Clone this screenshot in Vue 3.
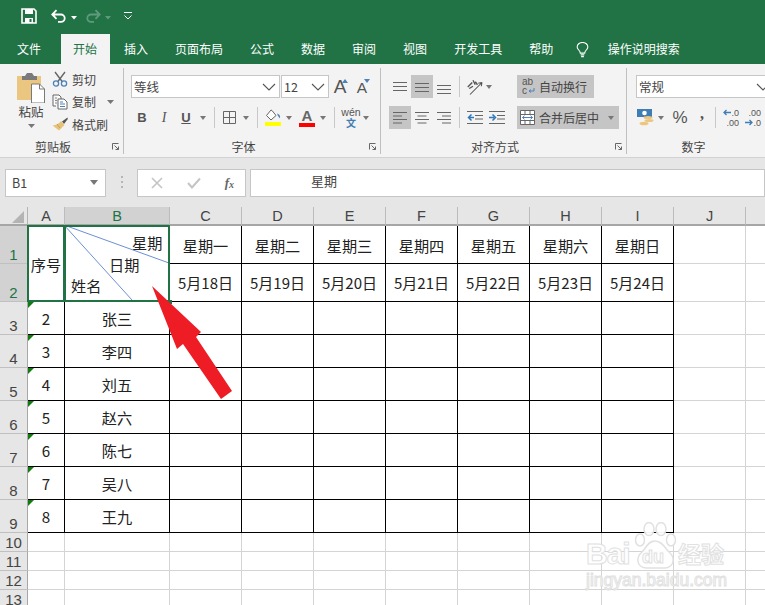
<script setup>
const tabs = ['文件', '开始', '插入', '页面布局', '公式', '数据', '审阅', '视图', '开发工具', '帮助']
const letters = ['A', 'B', 'C', 'D', 'E', 'F', 'G', 'H', 'I', 'J', 'K']
const weekdays = ['星期一', '星期二', '星期三', '星期四', '星期五', '星期六', '星期日']
const dates = ['5月18日', '5月19日', '5月20日', '5月21日', '5月22日', '5月23日', '5月24日']
const people = [
  { n: 3, id: '2', name: '张三' },
  { n: 4, id: '3', name: '李四' },
  { n: 5, id: '4', name: '刘五' },
  { n: 6, id: '5', name: '赵六' },
  { n: 7, id: '6', name: '陈七' },
  { n: 8, id: '7', name: '吴八' },
  { n: 9, id: '8', name: '王九' },
]
const emptyRows = [10, 11, 12, 13]
</script>

<template>
  <div class="app">
    <header class="title">
      <svg class="save" width="16" height="16" viewBox="0 0 16 16">
        <path d="M1 1h12l2 2v12H1z" fill="none" stroke="#fff" stroke-width="1.6" />
        <rect x="4" y="1" width="8" height="5" fill="#fff" />
        <rect x="4" y="10" width="8" height="5" fill="#fff" />
        <rect x="8.5" y="11" width="2" height="3" fill="#217346" />
      </svg>
      <svg class="undo" width="16" height="14" viewBox="0 0 16 14">
        <path d="M1.5 5.5 H10 a3.6 3.6 0 0 1 0 7.4 H7 M5.5 1.2 L1.3 5.5 L5.5 9.8" fill="none" stroke="#fff" stroke-width="1.8" />
      </svg>
      <svg class="qarrow" width="6" height="4" viewBox="0 0 6 4"><path d="M0 0h6L3 3.5z" fill="#fff" /></svg>
      <svg class="redo" width="16" height="14" viewBox="0 0 16 14">
        <path d="M14.5 5.5 H6 a3.6 3.6 0 0 0 0 7.4 H9 M10.5 1.2 L14.7 5.5 L10.5 9.8" fill="none" stroke="#5f9a7c" stroke-width="1.8" />
      </svg>
      <svg class="qarrow dim" width="6" height="4" viewBox="0 0 6 4"><path d="M0 0h6L3 3.5z" fill="#5f9a7c" /></svg>
      <svg class="custom" width="8" height="8" viewBox="0 0 8 8">
        <path d="M0 .5h8" stroke="#fff" fill="none" />
        <path d="M.5 3.5 L4 7 L7.5 3.5" stroke="#fff" fill="none" />
      </svg>
    </header>

    <nav class="tabs">
      <span v-for="t in tabs" :key="t" class="tab" :class="{ active: t === '开始', file: t === '文件' }">{{ t }}</span>
      <svg class="bulb" width="13" height="16" viewBox="0 0 14 18">
        <path d="M4.5 12.5 C4.5 9.5 1 8.5 1 5.5 A6 5 0 0 1 13 5.5 C13 8.5 9.5 9.5 9.5 12.5 Z" fill="none" stroke="#fff" stroke-width="1.2" />
        <path d="M5 14.5h4M5.5 16.5h3" stroke="#fff" stroke-width="1.3" />
      </svg>
      <span class="search">操作说明搜索</span>
    </nav>

    <section class="ribbon">
      <div class="group g-clip">
        <div class="clip-body">
          <div class="paste">
            <svg width="30" height="31" viewBox="0 0 30 31">
              <path d="M1 4h24v24H1z" fill="#eac681" />
              <path d="M6 4h3l2-3h5l2 3h3v4H6z" fill="#7a7a7a" />
              <path d="M15.5 12h8l5 5v14h-13z" fill="#fff" stroke="#7a7a7a" />
              <path d="M23.5 12v5h5" fill="none" stroke="#7a7a7a" />
            </svg>
            <span class="paste-text">粘贴</span>
            <svg class="arrow paste-arrow" width="7" height="4" viewBox="0 0 7 4"><path d="M0 0h7L3.5 4z" /></svg>
          </div>
          <div class="clip-list">
            <div class="clip-item">
              <svg width="16" height="16" viewBox="0 0 16 16">
                <path d="M3 1 L10.5 11 M13 1 L5.5 11" stroke="#666" stroke-width="1.4" fill="none" />
                <circle cx="4" cy="12.5" r="2.6" fill="none" stroke="#4d82b8" stroke-width="1.3" />
                <circle cx="12" cy="12.5" r="2.6" fill="none" stroke="#4d82b8" stroke-width="1.3" />
              </svg>
              <span>剪切</span>
            </div>
            <div class="clip-item">
              <svg width="16" height="16" viewBox="0 0 16 16">
                <path d="M1 1h6l2 2v2M4 12H1V1" fill="#fff" stroke="#666" />
                <path d="M6 5h6l3 3v7H6z" fill="#fff" stroke="#666" />
                <path d="M8 8h3M8 10h5M8 12.5h5" stroke="#4d82b8" />
                <path d="M3 4h2M3 6.500h2M3 9h2" stroke="#888" />
              </svg>
              <span>复制</span>
              <svg class="arrow copy-arrow" width="7" height="4" viewBox="0 0 7 4"><path d="M0 0h7L3.500 4z" /></svg>
            </div>
            <div class="clip-item">
              <svg width="16" height="14" viewBox="0 0 16 14">
                <path d="M15.500 .5 L10 4.500 L12 7 L15.800 2z" fill="#555" />
                <path d="M9 4 L12.500 8 L7 13.500 L.5 8.500 C4 8 6.500 7 9 4z" fill="#e7c27c" />
                <path d="M5 7 l3 4" stroke="#c79f56" fill="none" />
              </svg>
              <span>格式刷</span>
            </div>
          </div>
        </div>
        <div class="group-foot">
          <span class="group-label">剪贴板</span>
          <svg class="launcher" width="7" height="7" viewBox="0 0 7 7"><path d="M.5 6.500v-6h6M2.500 2.500l4 4M3.500 6.500h3v-3" fill="none" stroke="#666" /></svg>
        </div>
      </div>

      <div class="group g-font">
        <div class="rows">
          <div class="row">
            <div class="combo font-combo">
              <span>等线</span>
              <svg class="chev" width="14" height="8" viewBox="0 0 14 8"><path d="M1 1l6 6 6-6" fill="none" stroke="#555" stroke-width="1.1" /></svg>
            </div>
            <div class="combo size-combo">
              <span>12</span>
              <svg class="chev" width="14" height="8" viewBox="0 0 14 8"><path d="M1 1l6 6 6-6" fill="none" stroke="#555" stroke-width="1.1" /></svg>
            </div>
            <div class="tool sizer">
              <span class="big-a">A</span>
              <svg class="caret up" width="6" height="4" viewBox="0 0 6 4"><path d="M3 0l3 4H0z" fill="#4d82b8" /></svg>
            </div>
            <div class="tool sizer">
              <span class="small-a">A</span>
              <svg class="caret down" width="6" height="4" viewBox="0 0 6 4"><path d="M0 0h6L3 4z" fill="#4d82b8" /></svg>
            </div>
          </div>
          <div class="row">
            <span class="tool fmt bold">B</span>
            <span class="tool fmt italic">I</span>
            <span class="tool fmt under">U</span>
            <svg class="arrow a-slot" width="6" height="4" viewBox="0 0 6 4"><path d="M0 0h6L3 4z" /></svg>
            <i class="sep sep-a"></i>
            <span class="tool">
              <svg width="13" height="13" viewBox="0 0 13 13"><path d="M.5.5h12v12H.5zM6.500.5v12M.5 6.500h12" fill="none" stroke="#666" /></svg>
            </span>
            <svg class="arrow a-slot" width="6" height="4" viewBox="0 0 6 4"><path d="M0 0h6L3 4z" /></svg>
            <i class="sep sep-b"></i>
            <span class="tool">
              <svg width="17" height="17" viewBox="0 0 17 17">
                <path d="M6 1 L1.500 6.500 L6 11 L11 6.500 L7 1.500z" fill="#fff" stroke="#666" />
                <path d="M12 4.500 C14.500 5 15.500 7 15 9.500 L13 7z" fill="#4d82b8" />
                <rect y="13" width="16" height="4" fill="#ffff00" />
              </svg>
            </span>
            <svg class="arrow a-slot2" width="6" height="4" viewBox="0 0 6 4"><path d="M0 0h6L3 4z" /></svg>
            <span class="tool color-a">
              <span class="color-letter">A</span>
              <i class="color-bar"></i>
            </span>
            <svg class="arrow a-slot2" width="6" height="4" viewBox="0 0 6 4"><path d="M0 0h6L3 4z" /></svg>
            <i class="sep sep-c"></i>
            <span class="tool wen">
              <span class="wen-top">wén</span>
              <span class="wen-bot">文</span>
            </span>
            <svg class="arrow a-slot5" width="6" height="4" viewBox="0 0 6 4"><path d="M0 0h6L3 4z" /></svg>
          </div>
        </div>
        <div class="group-foot">
          <span class="group-label">字体</span>
          <svg class="launcher" width="7" height="7" viewBox="0 0 7 7"><path d="M.5 6.500v-6h6M2.500 2.500l4 4M3.500 6.500h3v-3" fill="none" stroke="#666" /></svg>
        </div>
      </div>

      <div class="group g-align">
        <div class="rows">
          <div class="row">
            <span class="tool al">
              <svg width="14" height="10" viewBox="0 0 14 10"><path d="M0 .5h14M0 4.500h14M0 8.500h14" stroke="#666" /></svg>
            </span>
            <span class="tool al on">
              <svg width="14" height="10" viewBox="0 0 14 10"><path d="M0 1.500h14M0 5.500h14M0 9.500h14" stroke="#666" /></svg>
            </span>
            <span class="tool al bottom">
              <svg width="14" height="10" viewBox="0 0 14 10"><path d="M0 1.500h14M0 5.500h14M0 9.500h14" stroke="#666" /></svg>
            </span>
            <i class="sep sep-d"></i>
            <span class="tool orient">
              <svg width="18" height="16" viewBox="0 0 24 20">
                <path d="M4 20 L20 4 M20 4 l-5 1 M20 4 l-1 5" stroke="#4f4f4f" fill="none" stroke-width="1.4" />
                <path d="M1 10 L7 4 M3 12 l5 -3 M8 1 l3 6 M11 3 l3 4" stroke="#555" fill="none" stroke-width="1.8" />
              </svg>
            </span>
            <svg class="arrow a-slot3" width="6" height="4" viewBox="0 0 6 4"><path d="M0 0h6L3 4z" /></svg>
          </div>
          <div class="row">
            <span class="tool al on">
              <svg width="14" height="12" viewBox="0 0 14 12"><path d="M0 .5h14M0 4h9M0 7.500h14M0 11h9" stroke="#666" /></svg>
            </span>
            <span class="tool al">
              <svg width="14" height="12" viewBox="0 0 14 12"><path d="M0 .5h14M2.500 4h9M0 7.500h14M2.500 11h9" stroke="#666" /></svg>
            </span>
            <span class="tool al">
              <svg width="14" height="12" viewBox="0 0 14 12"><path d="M0 .5h14M5 4h9M0 7.500h14M5 11h9" stroke="#666" /></svg>
            </span>
            <i class="sep sep-d"></i>
            <span class="tool indent">
              <svg width="16" height="13" viewBox="0 0 16 13">
                <path d="M0 .5h16M8 4.500h8M8 8h8M0 12.500h16" stroke="#666" />
                <path d="M7 6.500H2M4.500 3.500 L1.500 6.500 L4.500 9.500" stroke="#2f77b8" stroke-width="1.5" fill="none" />
              </svg>
            </span>
            <span class="tool indent">
              <svg width="16" height="13" viewBox="0 0 16 13">
                <path d="M0 .5h16M8 4.500h8M8 8h8M0 12.500h16" stroke="#666" />
                <path d="M0 6.500h5M3.500 3.500 L6.500 6.500 L3.500 9.500" stroke="#2f77b8" stroke-width="1.5" fill="none" />
              </svg>
            </span>
          </div>
        </div>
        <div class="wrap-col">
          <div class="wide-btn wrap-btn">
            <svg width="13" height="17" viewBox="0 0 13 17">
              <text x="0" y="7" class="abc">ab</text>
              <text x="0" y="16" class="abc">c</text>
              <path d="M12 10v3H7.500M9 11.500 L7 13 L9 14.500" stroke="#4d82b8" fill="none" />
            </svg>
            <span>自动换行</span>
          </div>
          <div class="wide-btn merge-btn">
            <svg width="15" height="15" viewBox="0 0 15 15">
              <path d="M.5.5h14v14H.5zM.5 4.500h14M.5 10.500h14M5 .5v4M10 .5v4M5 10.500v4M10 10.500v4" fill="#fff" stroke="#666" />
              <path d="M2.500 7.500h10M4.500 5.700 L2.500 7.500 L4.500 9.300M10.500 5.700 L12.500 7.500 L10.500 9.300" stroke="#4d82b8" fill="none" />
            </svg>
            <span>合并后居中</span>
            <svg class="arrow merge-arrow" width="6" height="4" viewBox="0 0 6 4"><path d="M0 0h6L3 4z" /></svg>
          </div>
        </div>
        <div class="group-foot">
          <span class="group-label">对齐方式</span>
          <svg class="launcher" width="7" height="7" viewBox="0 0 7 7"><path d="M.5 6.500v-6h6M2.500 2.500l4 4M3.500 6.500h3v-3" fill="none" stroke="#666" /></svg>
        </div>
      </div>

      <div class="group g-num">
        <div class="rows">
          <div class="row">
            <div class="combo num-combo">
              <span>常规</span>
              <svg class="chev" width="14" height="8" viewBox="0 0 14 8"><path d="M1 1l6 6 6-6" fill="none" stroke="#555" stroke-width="1.1" /></svg>
            </div>
          </div>
          <div class="row">
            <span class="tool money">
              <svg width="18" height="17" viewBox="0 0 18 17">
                <rect width="15" height="8" fill="#3f7db5" />
                <circle cx="7.500" cy="4" r="2.300" fill="#fff" />
                <ellipse cx="11" cy="8.500" rx="4.500" ry="1.500" fill="#eac681" />
                <ellipse cx="12" cy="11.500" rx="4.500" ry="1.500" fill="#eac681" />
                <ellipse cx="7" cy="14.500" rx="4.500" ry="1.800" fill="#eac681" />
              </svg>
            </span>
            <svg class="arrow a-slot4" width="6" height="4" viewBox="0 0 6 4"><path d="M0 0h6L3 4z" /></svg>
            <span class="tool pct">%</span>
            <span class="tool comma">,</span>
            <i class="sep sep-e"></i>
            <span class="tool dec">
              <span class="dec-line"><svg width="8" height="7" viewBox="0 0 8 7"><path d="M8 3.500H1M3.500 1 L1 3.500 L3.500 6" stroke="#3f7db5" stroke-width="1.300" fill="none" /></svg>.0</span>
              <span class="dec-line">.00</span>
            </span>
            <span class="tool dec">
              <span class="dec-line">.00</span>
              <span class="dec-line"><svg width="8" height="7" viewBox="0 0 8 7"><path d="M0 3.500h7M4.500 1 L7 3.500 L4.500 6" stroke="#3f7db5" stroke-width="1.300" fill="none" /></svg>.0</span>
            </span>
          </div>
        </div>
        <div class="group-foot">
          <span class="group-label">数字</span>
          <svg class="launcher" width="7" height="7" viewBox="0 0 7 7"><path d="M.5 6.500v-6h6M2.500 2.500l4 4M3.500 6.500h3v-3" fill="none" stroke="#666" /></svg>
        </div>
      </div>
    </section>

    <section class="formula">
      <div class="name-box">
        <span>B1</span>
        <svg width="8" height="5" viewBox="0 0 8 5"><path d="M0 0h8L4 5z" fill="#777" /></svg>
      </div>
      <i class="dots"></i>
      <div class="fx-box">
        <svg width="12" height="12" viewBox="0 0 12 12"><path d="M1 1l10 10M11 1L1 11" stroke="#c4c4c4" stroke-width="1.600" /></svg>
        <svg width="14" height="12" viewBox="0 0 14 12"><path d="M1 6l4 4.500L13 1.500" stroke="#c4c4c4" stroke-width="2" fill="none" /></svg>
        <span class="fx">f<sub>x</sub></span>
      </div>
      <div class="input">星期</div>
    </section>

    <main class="sheet">
      <div class="grid">
        <div class="corner">
          <svg width="12" height="12" viewBox="0 0 12 12"><path d="M12 0v12H0z" fill="#b4b4b4" /></svg>
        </div>
        <div v-for="l in letters" :key="l" class="col-head" :class="{ sel: l === 'B', hot: l === 'B' }">{{ l }}</div>

        <div class="row-head sel hot">1</div>
        <div class="cell black merged picked">序号</div>
        <div class="cell black merged picked diag">
          <svg class="diag-lines" width="105" height="76" viewBox="0 0 105 76">
            <path d="M0 0 L105 38 M0 0 L68 75" stroke="#6b8fd6" stroke-width="1" fill="none" />
          </svg>
          <span class="d1">星期</span>
          <span class="d2">日期</span>
          <span class="d3">姓名</span>
        </div>
        <div v-for="d in weekdays" :key="d" class="cell black">{{ d }}</div>
        <div class="cell"></div>
        <div class="cell"></div>

        <div class="row-head sel hot">2</div>
        <div v-for="d in dates" :key="d" class="cell black date">{{ d }}</div>
        <div class="cell"></div>
        <div class="cell"></div>

        <template v-for="p in people" :key="p.n">
          <div class="row-head">{{ p.n }}</div>
          <div class="cell black flagged">{{ p.id }}</div>
          <div class="cell black">{{ p.name }}</div>
          <div v-for="c in 7" :key="c" class="cell black"></div>
          <div class="cell"></div>
          <div class="cell"></div>
        </template>

        <template v-for="n in emptyRows" :key="n">
          <div class="row-head">{{ n }}</div>
          <div v-for="c in 11" :key="c" class="cell"></div>
        </template>
      </div>

      <svg class="pointer" width="90" height="120" viewBox="0 0 90 120">
        <path d="M1 1 L50 47 L45 52 L81 106 L70 114 L32 59 L26 64 Z" fill="#ee1c25" />
      </svg>

      <div class="mark">
        <div class="mark-top">
          <span class="mark-bai">Bai</span>
          <span class="mark-paw">
            <svg width="44" height="54" viewBox="0 0 44 54">
              <ellipse cx="15" cy="7" rx="5" ry="6.500" />
              <ellipse cx="27" cy="7" rx="5" ry="6.500" />
              <ellipse cx="6" cy="18" rx="4.500" ry="6" />
              <ellipse cx="37" cy="18" rx="4.500" ry="6" />
              <path d="M21 19 C14 19 12 26 8 30 C2 35 2 45 12 46 C17 46 25 46 31 46 C41 45 41 35 35 30 C31 26 28 19 21 19z" />
            </svg>
            <span class="mark-du">du</span>
          </span>
          <span class="mark-jy">经验</span>
        </div>
        <div class="mark-url">jingyan.baidu.com</div>
      </div>
    </main>
  </div>
</template>

<style scoped>
.app {
  width: 765px;
  height: 605px;
  overflow: hidden;
  position: relative;
  background: #fff;
  font-family: "Noto Sans CJK SC", "Liberation Sans", sans-serif;
  font-size: 12px;
  color: #444;
}
.title {
  height: 34px;
  background: #217346;
  display: flex;
  align-items: center;
  box-sizing: border-box;
  padding: 0 0 2px 21px;
}
.undo { margin-left: 14px; }
.qarrow { margin-left: 4px; margin-top: 3px; }
.redo { margin-left: 8px; }
.qarrow.dim { margin-left: 4px; }
.custom { margin-left: 13px; }

.tabs {
  height: 30px;
  background: #217346;
  display: flex;
  align-items: stretch;
  padding-left: 3.5px;
  color: #fff;
  line-height: 29px;
}
.tab { padding: 0 12.5px; margin: 0 1px; }
.tab.file { margin-right: 6px; }
.tab.active { background: #f3f3f3; color: #217346; }
.bulb { margin: 8px 0 0 9px; }
.search { margin-left: 19px; }

.ribbon {
  height: 94px;
  box-sizing: border-box;
  background: #f3f3f3;
  border-bottom: 1px solid #d2d2d2;
  display: flex;
  overflow: hidden;
}
.group {
  flex: none;
  display: grid;
  grid-template-rows: 70px 1fr;
  position: relative;
  margin: 4px 0;
  border-right: 1px solid #bfbfbf;
  box-sizing: border-box;
  height: 86px;
}
.g-clip { width: 124px; }
.g-font { width: 257px; }
.g-align { width: 246px; grid-template-columns: 136px 1fr; }
.g-num { width: 150px; border-right: 0; }
.g-align .group-foot { grid-column: 1 / 3; }

.group-foot {
  display: flex;
  align-items: flex-start;
  height: 16px;
}
.group-label {
  flex: 1;
  text-align: center;
  line-height: 18px;
  color: #444;
}
.launcher { flex: none; margin: 5px 4px 0 6px; }

.clip-body { display: flex; padding-left: 15px; }
.paste {
  width: 32px;
  display: flex;
  flex-direction: column;
  align-items: center;
  padding-top: 4px;
}
.paste-text { font-size: 12.5px; line-height: 17px; }
.paste-arrow { margin-top: 4px; }
.arrow { fill: #777; flex: none; }
.clip-list {
  display: flex;
  flex-direction: column;
  margin-left: 5px;
}
.clip-item {
  height: 22.500px;
  display: flex;
  align-items: center;
  gap: 4px;
}
.copy-arrow { margin-left: 7px; }

.rows {
  display: flex;
  flex-direction: column;
  gap: 8px;
  padding: 7px 0 0 7px;
}
.row { display: flex; align-items: center; height: 23px; }
.tool {
  flex: none;
  width: 22px;
  height: 23px;
  display: inline-flex;
  align-items: center;
  justify-content: center;
  position: relative;
  color: #555;
}
.combo {
  background: #fff;
  box-sizing: border-box;
  height: 23px;
  border: 1px solid #c6c6c6;
  display: flex;
  align-items: center;
  justify-content: space-between;
  padding: 0 3px 0 2px;
  font-size: 12.500px;
  color: #444;
}
.font-combo { width: 149px; }
.size-combo { width: 48px; margin-left: 1px; }
.big-a { font: 19px "Liberation Sans", sans-serif; color: #555; }
.small-a { font: 15.500px "Liberation Sans", sans-serif; color: #555; margin-top: 3px; }
.caret { position: absolute; }
.caret.up { top: 4px; right: 3px; }
.caret.down { top: 4px; right: 3px; }
.fmt { font: 13px "Liberation Sans", sans-serif; color: #555; }
.bold { font-weight: 700; }
.italic { font-family: "Liberation Serif", serif; font-style: italic; font-size: 14px; }
.under { text-decoration: underline; font-weight: 700; }
.a-slot { margin: 0 3px; }
.a-slot2 { margin: 0 4px 0 2px; }
.a-slot5 { margin-left: 1px; }
.sep { flex: none; width: 1px; height: 21px; background: #c8c8c8; display: block; }
.sep-a { margin: 0 3px 0 5px; }
.sep-b { margin: 0 4px 0 5px; }
.sep-c { margin: 0 5px 0 4px; }
.sep-d { margin: 0 7px 0 4px; }
.color-a { flex-direction: column; justify-content: flex-end; }
.color-letter { font: 700 15px/15px "Liberation Sans", sans-serif; color: #666; }
.color-bar { width: 16px; height: 4px; background: #f00; margin-bottom: 2px; display: block; }
.wen { flex-direction: column; }
.wen-top { font: 10.500px/10px "Liberation Sans", sans-serif; color: #555; }
.wen-bot { font-size: 10px; line-height: 12px; color: #3f7db5; font-weight: 700; }

.g-align .rows { padding-left: 8px; }
.al { width: 22px; }
.on { background: #c5c5c5; }
.bottom { align-items: flex-end; padding-bottom: 4px; box-sizing: border-box; }
.orient { width: 18px; }
.a-slot3 { margin-left: 1px; }
.indent { width: 16px; margin-right: 6px; }

.wrap-col {
  display: flex;
  flex-direction: column;
  gap: 8px;
  padding-top: 7px;
}
.wide-btn {
  height: 23px;
  background: #c5c5c5;
  display: flex;
  align-items: center;
  gap: 4px;
  box-sizing: border-box;
  padding-left: 5px;
}
.wrap-btn { width: 77px; }
.merge-btn { width: 102px; padding-left: 3px; }
.merge-arrow { margin-left: 5px; }
.abc { font: 10px "Liberation Sans", sans-serif; fill: #555; }

.g-num .rows { padding-left: 7px; }
.num-combo { width: 140px; margin-left: 2px; padding-right: 3px; justify-content: flex-start; gap: 92px; }
.money { width: 20px; justify-content: flex-start; padding-left: 3px; box-sizing: content-box; }
.a-slot4 { margin-left: 1px; }
.pct { font: 17px "Liberation Sans", sans-serif; margin-left: 5px; color: #555; }
.comma { font: 700 16px "Liberation Serif", serif; margin-top: -8px; color: #555; }
.sep-e { margin: 0 7px 0 2px; }
.dec {
  width: 16px;
  flex-direction: column;
  font: 9px/10px "Liberation Sans", sans-serif;
  margin-right: 6px;
  align-items: flex-end;
}
.dec-line { display: flex; align-items: center; white-space: nowrap; }

.formula {
  height: 49px;
  background: #e6e6e6;
  display: flex;
  align-items: flex-start;
  box-sizing: border-box;
  padding: 11px 0 0 5px;
}
.name-box {
  width: 101px;
  height: 28px;
  box-sizing: border-box;
  background: #fff;
  border: 1px solid #c6c6c6;
  display: flex;
  align-items: center;
  justify-content: space-between;
  padding: 0 7px 1px 6px;
  font-size: 12.500px;
}
.dots {
  width: 2px;
  height: 12px;
  margin: 7px 14px 0 15px;
  background: repeating-linear-gradient(#b5b5b5 0 2px, transparent 2px 5px);
  display: block;
}
.fx-box {
  width: 109px;
  height: 28px;
  box-sizing: border-box;
  background: #fff;
  border: 1px solid #c6c6c6;
  display: flex;
  align-items: center;
  padding: 0 11px 0 13px;
  justify-content: space-between;
}
.fx { font: italic 700 13px "Liberation Serif", serif; color: #666; }
.fx sub { font-size: 10px; vertical-align: -1px; line-height: 0; }
.input {
  flex: 1;
  height: 28px;
  margin-left: 4px;
  box-sizing: border-box;
  background: #fff;
  border: 1px solid #c6c6c6;
  padding-left: 60px;
  line-height: 22px;
  font-size: 13px;
  color: #444;
}

.sheet { position: relative; height: 398px; overflow: hidden; }
.grid {
  display: grid;
  grid-template-columns: 28px 37px 105px repeat(9, 72px);
  grid-template-rows: 19px 38px 38px repeat(7, 33px) repeat(4, 19px);
}
.corner {
  background: #e6e6e6;
  border-right: 1px solid #b4b4b4;
  border-bottom: 2px solid #a6a6a6;
  box-sizing: border-box;
  display: flex;
  align-items: flex-end;
  justify-content: flex-end;
  padding: 0 3px 1px 0;
}
.col-head {
  background: #e6e6e6;
  border-right: 1px solid #bcbcbc;
  border-bottom: 2px solid #a6a6a6;
  box-sizing: border-box;
  text-align: center;
  font: 14.500px/19px "Liberation Sans", sans-serif;
  color: #444;
}
.row-head {
  background: #e6e6e6;
  border-right: 1px solid #a8a8a8;
  border-bottom: 1px solid #c0c0c0;
  box-sizing: border-box;
  display: flex;
  align-items: flex-end;
  justify-content: center;
  font: 15px/17px "Liberation Sans", sans-serif;
  color: #444;
}
.col-head.sel, .row-head.sel { background: #d2d2d2; }
.col-head.hot, .row-head.hot { color: #217346; }
.cell {
  box-sizing: border-box;
  border-right: 1px solid #d4d4d4;
  border-bottom: 1px solid #d4d4d4;
  display: flex;
  align-items: center;
  justify-content: center;
  position: relative;
  font-size: 15.200px;
  color: #222;
  white-space: nowrap;
}
.black { border-color: #000; }
.date { font-size: 15px; }
.merged { grid-row: span 2; }
.picked::after {
  content: "";
  position: absolute;
  inset: -1px;
  border: 2px solid #217346;
  pointer-events: none;
}
.diag {
  flex-direction: column;
  align-items: stretch;
  justify-content: flex-start;
  padding-top: 6px;
  line-height: 21.500px;
}
.diag::before {
  content: "";
  position: absolute;
  right: -3px;
  bottom: -3px;
  width: 4px;
  height: 4px;
  background: #217346;
  z-index: 2;
}
.diag-lines { position: absolute; left: -1px; top: -1px; }
.d1 { padding-left: 67px; }
.d2 { padding-left: 44px; }
.d3 { padding-left: 6px; }
.flagged::before {
  content: "";
  position: absolute;
  left: 0;
  top: 0;
  border-top: 6px solid #107c10;
  border-right: 6px solid transparent;
}
.pointer { position: absolute; left: 151px; top: 78px; z-index: 3; }

.mark {
  position: absolute;
  left: 586px;
  top: 315px;
  width: 140px;
  color: #fff;
  opacity: .95;
}
.mark-top { display: flex; align-items: flex-start; height: 49px; }
.mark-bai, .mark-du, .mark-url, .mark-jy {
  font-family: "Liberation Sans", sans-serif;
  color: #fff;
  -webkit-text-stroke: 1px #e0e0e0;
}
.mark-bai { font-size: 30px; font-weight: 700; line-height: 30px; margin-top: 17px; letter-spacing: -1px; width: 50px; }
.mark-paw { position: relative; width: 44px; flex: none; margin-left: -2px; }
.mark-paw svg { fill: #fff; stroke: #e0e0e0; stroke-width: 1.500; }
.mark-du { position: absolute; left: 8px; top: 26px; font-size: 18px; line-height: 18px; font-weight: 700; }
.mark-jy { font-family: "Noto Sans CJK SC", sans-serif; font-size: 23px; line-height: 24px; margin-top: 19px; font-weight: 700; }
.mark-url { font-size: 17.500px; line-height: 18px; white-space: nowrap; }
</style>
